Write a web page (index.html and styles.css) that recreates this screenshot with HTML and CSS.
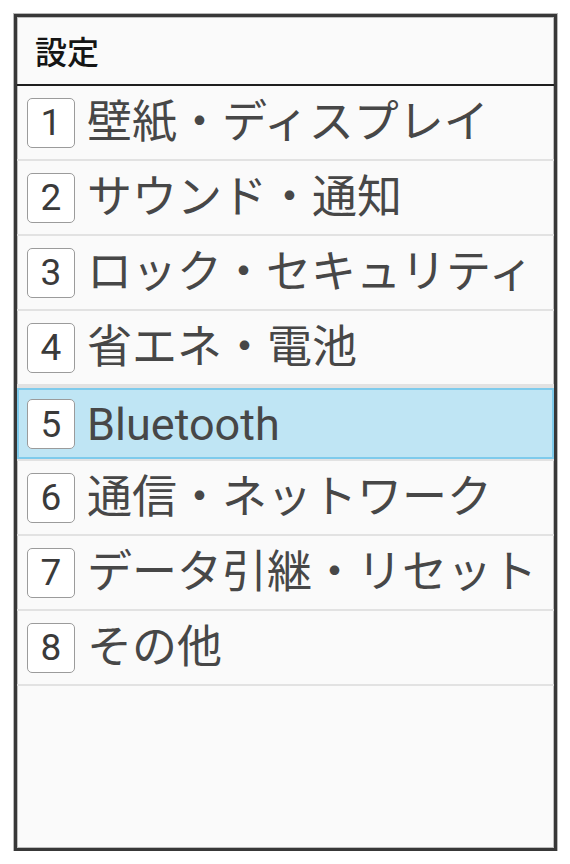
FILE: index.html
```html
<!DOCTYPE html>
<html lang="ja">
<head>
<meta charset="utf-8">
<title>設定</title>
<link rel="stylesheet" href="styles.css">
</head>
<body>
<div class="frame">
  <div class="header">設定</div>
  <ul class="menu">
    <li class="row"><span class="num">1</span><span class="label">壁紙・ディスプレイ</span></li>
    <li class="row"><span class="num">2</span><span class="label">サウンド・通知</span></li>
    <li class="row"><span class="num">3</span><span class="label">ロック・セキュリティ</span></li>
    <li class="row"><span class="num">4</span><span class="label">省エネ・電池</span></li>
    <li class="row selected"><span class="num">5</span><span class="label">Bluetooth</span></li>
    <li class="row"><span class="num">6</span><span class="label">通信・ネットワーク</span></li>
    <li class="row"><span class="num">7</span><span class="label">データ引継・リセット</span></li>
    <li class="row"><span class="num">8</span><span class="label">その他</span></li>
  </ul>
</div>
</body>
</html>
```

FILE: styles.css
```css
html, body {
  margin: 0;
  padding: 0;
  background: #ffffff;
}

body {
  padding: 14px 0 0 14px;
  font-family: Roboto, "Noto Sans CJK JP", sans-serif;
}

.frame {
  box-sizing: border-box;
  width: 543px;
  height: 837px;
  border: 3px solid #383838;
  box-shadow: 0 0 0 1px #b8b8b8, inset 0 0 0 1px #bdbdbd;
  background: #fafafa;
  display: flex;
  flex-direction: column;
  overflow: hidden;
}

.header {
  box-sizing: border-box;
  height: 69px;
  border-bottom: 2px solid #1e1e1e;
  padding-left: 18px;
  display: flex;
  align-items: center;
  font-family: "Noto Sans CJK JP", sans-serif;
  font-size: 32px;
  font-weight: 500;
  color: #151515;
  padding-bottom: 2px;
}

.menu {
  list-style: none;
  margin: 0;
  padding: 0;
}

.row {
  box-sizing: border-box;
  height: 75px;
  border-bottom: 2px solid #e2e2e2;
  display: flex;
  align-items: center;
  padding-left: 10px;
  color: #474747;
}

.row.selected {
  background: #bfe5f4;
  box-shadow: inset 0 2px 0 #e2e2e2, inset 0 4px 0 #7ecbec, inset 0 -2px 0 #7ecbec, inset 2px 0 0 #7ecbec, inset -2px 0 0 #7ecbec;
  padding-top: 3px;
}

.num {
  box-sizing: border-box;
  width: 48px;
  height: 50px;
  border: 1.5px solid #9b9b9b;
  border-radius: 5px;
  background: #ffffff;
  display: flex;
  align-items: center;
  justify-content: center;
  font-family: Roboto, sans-serif;
  font-size: 37px;
  color: #3a3a3a;
  line-height: 1;
  flex: none;
}

.label {
  margin-left: 12px;
  font-size: 45px;
  line-height: 1;
  white-space: nowrap;
  font-family: Roboto, "Noto Sans CJK JP", sans-serif;
}
```
